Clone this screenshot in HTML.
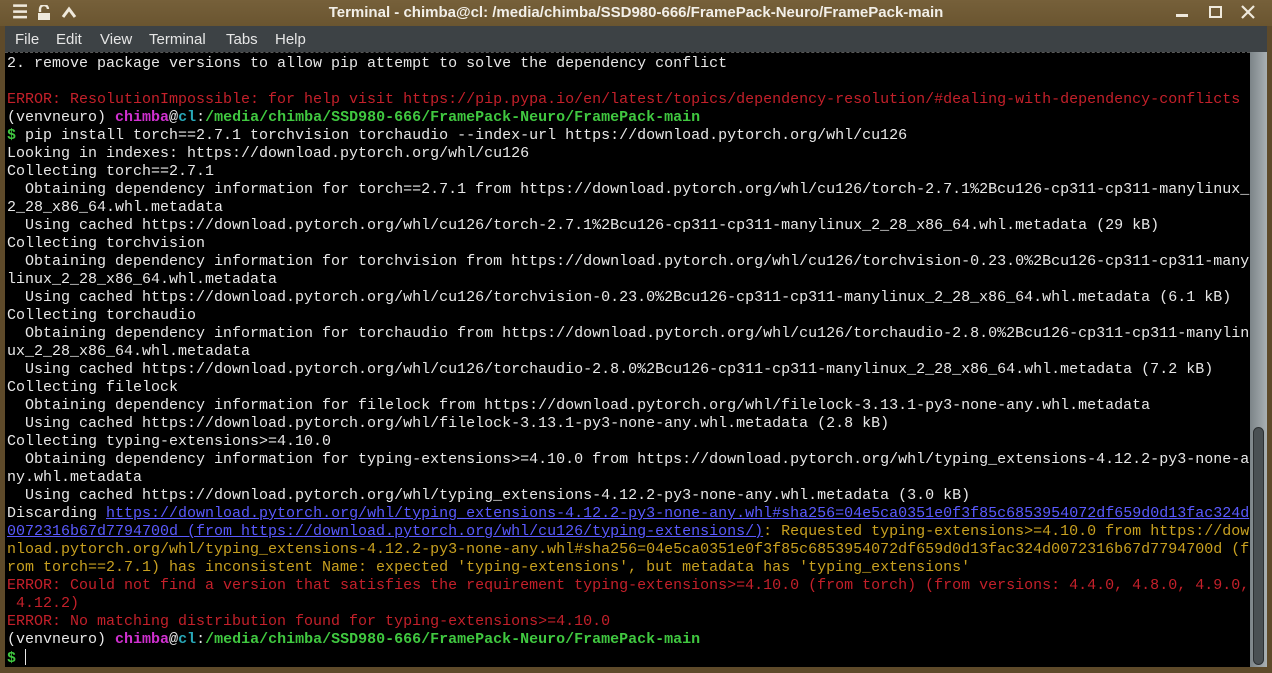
<!DOCTYPE html>
<html><head><meta charset="utf-8"><style>
*{margin:0;padding:0;box-sizing:border-box}
body{width:1272px;height:673px;background:#5e4a2a;overflow:hidden;position:relative;font-family:"Liberation Sans",sans-serif}
#title{position:absolute;left:0;top:0;width:1272px;height:26px;background:linear-gradient(#76603a,#6a5530);}
#title .t{position:absolute;left:0;right:0;top:4px;text-align:center;color:#f2efe8;font-weight:bold;font-size:15px;padding-left:0}
#menu{position:absolute;left:5px;top:26px;width:1262px;height:26px;background:#3d4245;color:#e6e6e6;font-size:15px}
#menu span{position:absolute;top:5px}
#term{position:absolute;left:5px;top:52px;width:1245px;height:615px;background:#000;border-top:1px dashed #555}
#sb{position:absolute;left:1250px;top:52px;width:17px;height:615px;background:linear-gradient(90deg,#7c8488,#a9b0b3)}
#thumb{position:absolute;left:3px;top:375px;width:11px;height:238px;border-radius:6px;background:#4a5053;border:1px solid #2c3032}
pre{position:absolute;left:2px;top:2px;font-family:"Liberation Mono",monospace;font-size:15px;line-height:18px;color:#e8e8e8;white-space:pre}
.r{color:#c4202a}.y{color:#c8a020}.l{color:#5a5aff;text-decoration:underline}.m{color:#d030d0;font-weight:bold}.c{color:#28a8b8;font-weight:bold}.g{color:#40c840;font-weight:bold}
.ic{position:absolute;color:#efe9dc;font-weight:bold}
</style></head><body>
<div id="title">
<div class="ic" style="left:12px;top:2px;font-size:18px">☰</div>
<svg style="position:absolute;left:36px;top:5px" width="16" height="16"><path d="M4 7V4a4 4 0 0 1 8 0" stroke="#efe9dc" stroke-width="2.4" fill="none"/><rect x="2" y="8" width="12" height="7" fill="#efe9dc"/></svg>
<svg style="position:absolute;left:61px;top:5px" width="16" height="14"><path d="M2 12L8 4L14 12" stroke="#efe9dc" stroke-width="3" fill="none"/></svg>
<div class="t">Terminal - chimba@cl: /media/chimba/SSD980-666/FramePack-Neuro/FramePack-main</div>
<div style="position:absolute;left:1176px;top:14px;width:12px;height:3px;background:#efe9dc"></div>
<div style="position:absolute;left:1209px;top:6px;width:13px;height:12px;border:2px solid #efe9dc"></div>
<svg style="position:absolute;left:1241px;top:5px" width="14" height="14"><path d="M1 1L13 13M13 1L1 13" stroke="#efe9dc" stroke-width="2.2"/></svg>
</div>
<div id="menu"><span style="left:10px">File</span><span style="left:51px">Edit</span><span style="left:95px">View</span><span style="left:144px">Terminal</span><span style="left:221px">Tabs</span><span style="left:270px">Help</span></div>
<div id="term"><pre>2. remove package versions to allow pip attempt to solve the dependency conflict

<span class="r">ERROR: ResolutionImpossible: for help visit https://pip.pypa.io/en/latest/topics/dependency-resolution/#dealing-with-dependency-conflicts</span>
(venvneuro) <span class="m">chimba</span>@<span class="c">cl</span>:<span class="g">/media/chimba/SSD980-666/FramePack-Neuro/FramePack-main</span>
<span class="g">$</span> pip install torch==2.7.1 torchvision torchaudio --index-url https://download.pytorch.org/whl/cu126
Looking in indexes: https://download.pytorch.org/whl/cu126
Collecting torch==2.7.1
  Obtaining dependency information for torch==2.7.1 from https://download.pytorch.org/whl/cu126/torch-2.7.1%2Bcu126-cp311-cp311-manylinux_
2_28_x86_64.whl.metadata
  Using cached https://download.pytorch.org/whl/cu126/torch-2.7.1%2Bcu126-cp311-cp311-manylinux_2_28_x86_64.whl.metadata (29 kB)
Collecting torchvision
  Obtaining dependency information for torchvision from https://download.pytorch.org/whl/cu126/torchvision-0.23.0%2Bcu126-cp311-cp311-many
linux_2_28_x86_64.whl.metadata
  Using cached https://download.pytorch.org/whl/cu126/torchvision-0.23.0%2Bcu126-cp311-cp311-manylinux_2_28_x86_64.whl.metadata (6.1 kB)
Collecting torchaudio
  Obtaining dependency information for torchaudio from https://download.pytorch.org/whl/cu126/torchaudio-2.8.0%2Bcu126-cp311-cp311-manylin
ux_2_28_x86_64.whl.metadata
  Using cached https://download.pytorch.org/whl/cu126/torchaudio-2.8.0%2Bcu126-cp311-cp311-manylinux_2_28_x86_64.whl.metadata (7.2 kB)
Collecting filelock
  Obtaining dependency information for filelock from https://download.pytorch.org/whl/filelock-3.13.1-py3-none-any.whl.metadata
  Using cached https://download.pytorch.org/whl/filelock-3.13.1-py3-none-any.whl.metadata (2.8 kB)
Collecting typing-extensions&gt;=4.10.0
  Obtaining dependency information for typing-extensions&gt;=4.10.0 from https://download.pytorch.org/whl/typing_extensions-4.12.2-py3-none-a
ny.whl.metadata
  Using cached https://download.pytorch.org/whl/typing_extensions-4.12.2-py3-none-any.whl.metadata (3.0 kB)
Discarding <span class="l">https://download.pytorch.org/whl/typing_extensions-4.12.2-py3-none-any.whl#sha256=04e5ca0351e0f3f85c6853954072df659d0d13fac324d</span>
<span class="l">0072316b67d7794700d (from https://download.pytorch.org/whl/cu126/typing-extensions/)</span><span class="y">: Requested typing-extensions&gt;=4.10.0 from https://dow</span>
<span class="y">nload.pytorch.org/whl/typing_extensions-4.12.2-py3-none-any.whl#sha256=04e5ca0351e0f3f85c6853954072df659d0d13fac324d0072316b67d7794700d (f</span>
<span class="y">rom torch==2.7.1) has inconsistent Name: expected 'typing-extensions', but metadata has 'typing_extensions'</span>
<span class="r">ERROR: Could not find a version that satisfies the requirement typing-extensions&gt;=4.10.0 (from torch) (from versions: 4.4.0, 4.8.0, 4.9.0,</span>
<span class="r"> 4.12.2)</span>
<span class="r">ERROR: No matching distribution found for typing-extensions&gt;=4.10.0</span>
(venvneuro) <span class="m">chimba</span>@<span class="c">cl</span>:<span class="g">/media/chimba/SSD980-666/FramePack-Neuro/FramePack-main</span>
<span class="g">$</span> <span style="display:inline-block;width:1px;height:16px;background:#e8e8e8;vertical-align:-3px"></span></pre></div>
<div id="sb"><div id="thumb"></div></div>
</body></html>
